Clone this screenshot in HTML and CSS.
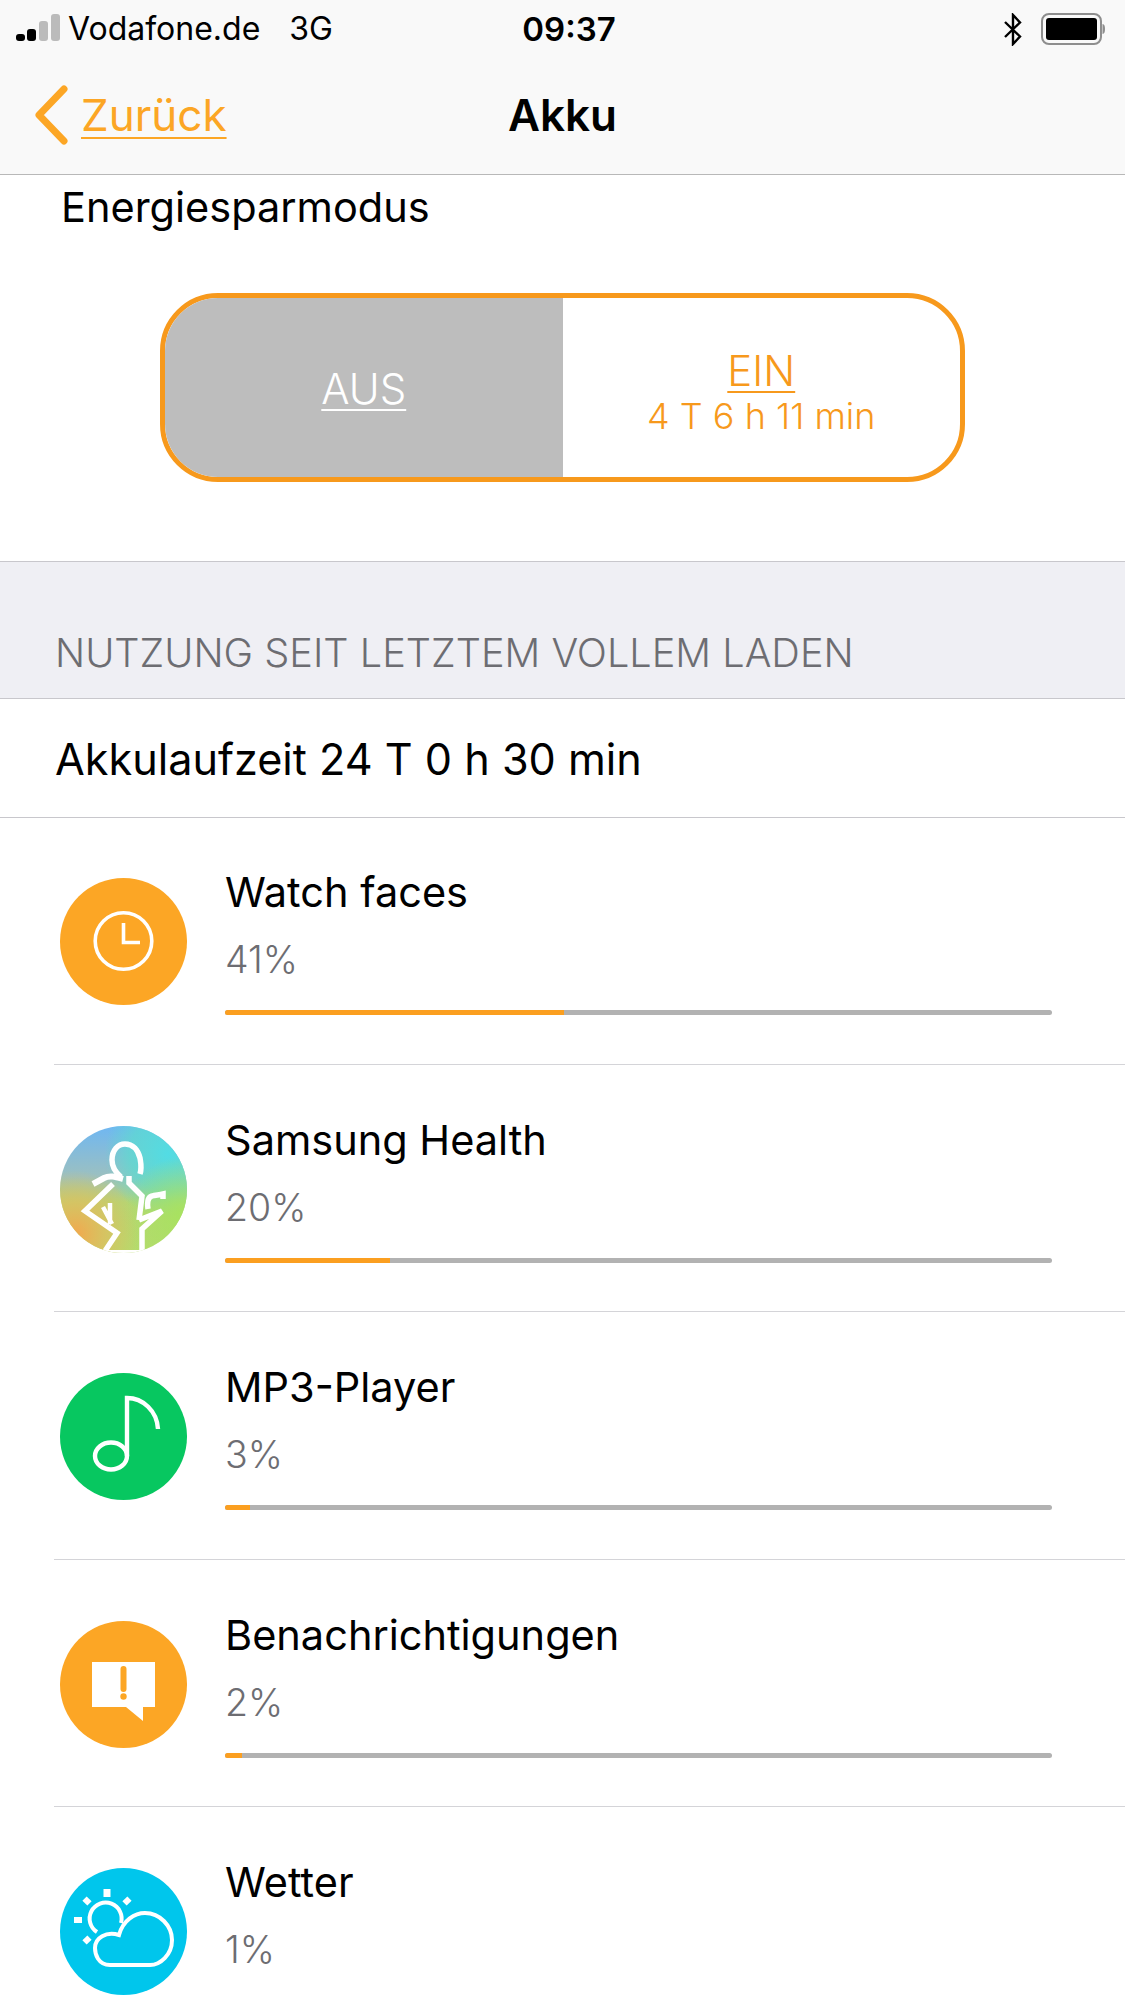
FILE: index.html
```html
<!DOCTYPE html>
<html lang="de">
<head>
<meta charset="utf-8">
<title>Akku</title>
<link rel="stylesheet" href="styles.css">
</head>
<body>
<header class="top">
  <div class="status">
    <div class="status-left">
      <svg class="signal" width="46" height="30" viewBox="0 0 46 30"><rect x="0" y="20" width="9" height="7" rx="3" fill="#000"/><rect x="11" y="15" width="9" height="12" rx="3" fill="#000"/><rect x="23" y="7" width="9" height="20" rx="3" fill="#bbb"/><rect x="35" y="0" width="9" height="27" rx="3" fill="#bbb"/></svg>
      <span class="carrier">Vodafone.de</span><span class="net">3G</span>
    </div>
    <div class="clock">09:37</div>
    <div class="status-right">
      <svg class="bt" width="20" height="33" viewBox="0 0 20 33"><path d="M2 9 17 23.500 10 31V2l7 7.500L2 24" fill="none" stroke="#000" stroke-width="2.400"/></svg>
      <svg class="batt" width="64" height="32" viewBox="0 0 64 32"><rect x="1" y="1" width="59" height="30" rx="7" fill="none" stroke="#8e8e8e" stroke-width="2"/><rect x="5" y="5" width="51" height="22" rx="3" fill="#000"/><path d="M61.500 11c2 .5 2.500 2 2.500 5s-.5 4.500-2.500 5z" fill="#8e8e8e"/></svg>
    </div>
  </div>
  <nav class="nav">
    <a class="back">
      <svg class="chev" width="34" height="60" viewBox="0 0 34 60"><path d="M30 4 5 30l25 26" fill="none" stroke="#fca625" stroke-width="7" stroke-linecap="round" stroke-linejoin="round"/></svg>
      <span class="back-text">Zurück</span>
    </a>
    <h1 class="title">Akku</h1>
    <span class="nav-spacer"></span>
  </nav>
</header>

<section class="saver">
  <div class="saver-label">Energiesparmodus</div>
  <div class="toggle">
    <div class="opt opt-off"><span class="opt-name">AUS</span></div>
    <div class="opt opt-on"><span class="opt-name">EIN</span><span class="opt-sub">4 T 6 h 11 min</span></div>
  </div>
</section>

<div class="section-head">NUTZUNG SEIT LETZTEM VOLLEM LADEN</div>
<div class="uptime">Akkulaufzeit 24 T 0 h 30 min</div>

<ul class="list">
  <li class="row">
    <svg class="icon" viewBox="0 0 127 127"><circle cx="63.500" cy="63.500" r="63.500" fill="#fca625"/><circle cx="63.500" cy="63" r="28.300" fill="none" stroke="#fff" stroke-width="3.600"/><path d="M63.500 45v19.500H80" fill="none" stroke="#fff" stroke-width="3.600"/></svg>
    <div class="body">
      <div class="name">Watch faces</div>
      <div class="pct">41%</div>
      <div class="bar"><div class="fill" style="width:41%"></div></div>
    </div>
  </li>
  <li class="row">
    <svg class="icon" viewBox="0 0 127 127">
      <defs>
        <clipPath id="disc"><circle cx="63.500" cy="63.500" r="63.500"/></clipPath>
        <linearGradient id="sky" x1="0" y1="0" x2="0" y2="1"><stop offset="0" stop-color="#6fb7f2"/><stop offset=".4" stop-color="#9cc0c0"/><stop offset=".6" stop-color="#b5d574"/><stop offset="1" stop-color="#b4dc6c"/></linearGradient>
        <radialGradient id="tr" cx="85%" cy="22%" r="50%"><stop offset="0" stop-color="#52dce4"/><stop offset=".6" stop-color="#5adcd0" stop-opacity=".7"/><stop offset="1" stop-color="#5adcd0" stop-opacity="0"/></radialGradient>
        <radialGradient id="br" cx="95%" cy="70%" r="45%"><stop offset="0" stop-color="#a8e260"/><stop offset="1" stop-color="#a8e260" stop-opacity="0"/></radialGradient>
        <radialGradient id="bl" cx="12%" cy="85%" r="50%"><stop offset="0" stop-color="#f2a84e"/><stop offset=".5" stop-color="#dcc060" stop-opacity=".8"/><stop offset="1" stop-color="#dcc060" stop-opacity="0"/></radialGradient>
      </defs>
      <g clip-path="url(#disc)">
        <rect width="127" height="127" fill="url(#sky)"/>
        <rect width="127" height="127" fill="url(#tr)"/>
        <rect width="127" height="127" fill="url(#br)"/>
        <rect width="127" height="127" fill="url(#bl)"/>
        <g fill="none" stroke="#fff" stroke-width="5.500">
          <path d="M61 51C55 46 52 40 52 34 52 24 58 18 65 18c8 0 13 6 15 14 1 6 2 10 0 16"/>
          <path d="M33 58 44 52c6-3 12-1 19 1" stroke-width="6"/>
          <path d="M53 58 25 85l32 22-12 18"/>
          <path d="M43 81l9 17M50 77v21" stroke-width="4.500"/>
          <path d="M69 50v7l13 13-3 24"/>
          <path d="M79 94l23-9-20 18v22"/>
          <path d="M88 83c-1-7 0-12 4-13 3-1 7-1 11-2v5" stroke-width="5.500"/>
        </g>
        <rect x="0" y="124" width="127" height="3" fill="#fff"/>
      </g>
    </svg>
    <div class="body">
      <div class="name">Samsung Health</div>
      <div class="pct">20%</div>
      <div class="bar"><div class="fill" style="width:20%"></div></div>
    </div>
  </li>
  <li class="row">
    <svg class="icon" viewBox="0 0 127 127"><circle cx="63.500" cy="63.500" r="63.500" fill="#07c760"/><path d="M67 83V25c16 0 30 13 31 31" fill="none" stroke="#fff" stroke-width="4.400"/><ellipse cx="51" cy="83" rx="16" ry="13.500" fill="none" stroke="#fff" stroke-width="4.400"/></svg>
    <div class="body">
      <div class="name">MP3-Player</div>
      <div class="pct">3%</div>
      <div class="bar"><div class="fill" style="width:3%"></div></div>
    </div>
  </li>
  <li class="row">
    <svg class="icon" viewBox="0 0 127 127"><circle cx="63.500" cy="63.500" r="63.500" fill="#fca625"/><path d="M32 41h63v45H83v14L66 86H32z" fill="#fff"/><path d="M63.500 48v20" stroke="#fca625" stroke-width="6" stroke-linecap="round"/><circle cx="63.500" cy="75.500" r="3.200" fill="#fca625"/></svg>
    <div class="body">
      <div class="name">Benachrichtigungen</div>
      <div class="pct">2%</div>
      <div class="bar"><div class="fill" style="width:2%"></div></div>
    </div>
  </li>
  <li class="row">
    <svg class="icon" viewBox="0 0 127 127"><circle cx="63.500" cy="63.500" r="63.500" fill="#00c6ec"/>
      <g fill="none" stroke="#fff" stroke-width="4"><path d="M37 64A16 16 0 1 1 61 55"/><path d="M50 97C38 97 35 86 35 80 35 70 46 63 59 67 63 52 75 45 85 45 100 45 112 58 112 72 112 87 100 97 90 97z"/></g>
      <g fill="#fff"><rect x="43.500" y="21" width="7" height="8"/><rect x="14" y="49" width="8" height="6"/><rect x="23.500" y="30" width="7" height="6" transform="rotate(45 27 33)"/><rect x="63.500" y="30" width="7" height="6" transform="rotate(-45 67 33)"/><rect x="23.500" y="69" width="7" height="6" transform="rotate(-45 27 72)"/></g>
    </svg>
    <div class="body">
      <div class="name">Wetter</div>
      <div class="pct">1%</div>
      <div class="bar"><div class="fill" style="width:1.2%"></div></div>
    </div>
  </li>
</ul>
</body>
</html>
```

FILE: styles.css
```css
* { box-sizing: border-box; }
html, body { margin: 0; padding: 0; }
body {
  width: 1125px;
  height: 2000px;
  overflow: hidden;
  background: #fff;
  color: #000;
  font-family: Inter, "Liberation Sans", sans-serif;
}
.top {
  height: 175px;
  background: #f9f9f9;
  border-bottom: 1px solid #b8b8b8;
}
.status {
  display: grid;
  grid-template-columns: 1fr auto 1fr;
  align-items: center;
  height: 58px;
  padding: 0 3px 0 16px;
  font-size: 32px;
  line-height: 38px;
}
.status-left { display: flex; align-items: center; }
.signal { margin-right: 6px; }
.carrier { margin-right: 29px; }
.clock { font-size: 33px; font-weight: 600; }
.status-right { display: flex; justify-content: flex-end; align-items: center; gap: 18px; padding-right: 17px; }
.nav {
  display: grid;
  grid-template-columns: 1fr auto 1fr;
  align-items: center;
  height: 116px;
  padding-bottom: 2px;
}
.back { display: flex; align-items: center; gap: 13px; padding-left: 34px; color: #fca625; }
.back-text { font-size: 44px; line-height: 50px; text-decoration: underline; text-decoration-thickness: 2px; text-underline-offset: 6px; }
.title { margin: 0; font-size: 44px; font-weight: 600; line-height: 50px; }
.saver {
  height: 387px;
  border-bottom: 1px solid #c8c7cc;
  padding: 0 0 0 61px;
}
.saver-label { font-size: 41.5px; line-height: 50px; padding-top: 7px; }
.toggle {
  display: flex;
  width: 805px;
  height: 189px;
  margin: 61px 0 0 99px;
  border: 5.5px solid #f7991c;
  border-radius: 58px;
  overflow: hidden;
}
.opt { flex: 0 0 50%; display: flex; flex-direction: column; align-items: center; justify-content: center; }
.opt-off { background: #bdbdbd; color: #fff; padding-top: 2px; }
.opt-on { color: #f7991c; padding-top: 8px; }
.opt-name { font-size: 42px; font-weight: 300; line-height: 46px; text-decoration: underline; text-decoration-thickness: 2px; text-underline-offset: 5px; }
.opt-sub { font-size: 36px; font-weight: 300; line-height: 40px; margin-top: 2px; }
.section-head {
  height: 137px;
  padding: 68px 0 0 55px;
  background: #efeff4;
  border-bottom: 1px solid #c8c7cc;
  color: #6d6d72;
  font-size: 39.7px;
  font-weight: 300;
  line-height: 46px;
}
.uptime {
  height: 119px;
  padding: 35px 0 0 55px;
  border-bottom: 1px solid #c8c7cc;
  font-size: 43.2px;
  line-height: 50px;
}
.list { list-style: none; margin: -1px 0 0; padding: 0; }
.row {
  display: flex;
  height: 247.5px;
  margin-left: 54px;
  padding: 50px 73px 0 6px;
  border-bottom: 1px solid #d4d4d8;
  gap: 38px;
}
.row:last-child { border-bottom: 0; }
.icon { width: 127px; height: 127px; flex: none; margin-top: 11px; }
.body { flex: 1; }
.name { font-size: 41.5px; line-height: 50px; }
.pct { font-size: 37.5px; font-weight: 300; line-height: 44px; margin-top: 21px; color: #6d6d72; }
.bar { height: 5px; margin-top: 28px; background: #b2b2b2; border-radius: 3px; overflow: hidden; }
.fill { height: 100%; background: #fb9f20; }
```
